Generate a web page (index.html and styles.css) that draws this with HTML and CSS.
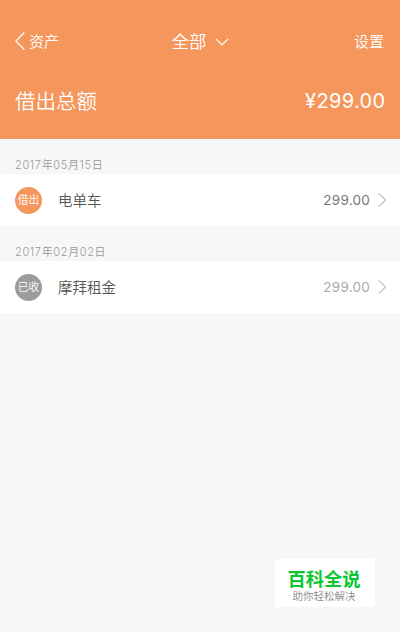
FILE: index.html
```html
<!DOCTYPE html>
<html lang="zh-CN">
<head>
  <meta charset="UTF-8">
  <title>借出总额</title>
  <link rel="stylesheet" href="styles.css">
</head>
<body>

<header class="header">
  <div class="nav">
    <a class="back">
      <svg width="10" height="18" viewBox="0 0 10 18"><path d="M9.3 0.5 L0.8 9 L9.3 17.5" /></svg>
      <span>资产</span>
    </a>
    <div class="title">
      <span>全部</span>
      <svg width="14" height="8" viewBox="0 0 14 8"><path d="M0.8 0.8 L7 7 L13.2 0.8" /></svg>
    </div>
    <a class="settings">设置</a>
  </div>
  <div class="total">
    <span class="total-label">借出总额</span>
    <span class="total-amount">¥299.00</span>
  </div>
</header>

<main>
  <h3 class="date">2017年05月15日</h3>
  <div class="row">
    <span class="tag">借出</span>
    <span class="name">电单车</span>
    <span class="amount">299.00</span>
    <svg class="arrow" width="9" height="14" viewBox="0 0 9 14"><path d="M0.8 0.5 L7.6 7 L0.8 13.5" /></svg>
  </div>
  <h3 class="date">2017年02月02日</h3>
  <div class="row done">
    <span class="tag">已收</span>
    <span class="name">摩拜租金</span>
    <span class="amount">299.00</span>
    <svg class="arrow" width="9" height="14" viewBox="0 0 9 14"><path d="M0.8 0.5 L7.6 7 L0.8 13.5" /></svg>
  </div>
</main>

<div class="watermark">
  <div class="brand">百科全说</div>
  <div class="slogan">助你轻松解决</div>
</div>

</body>
</html>
```
FILE: styles.css
```css
* { box-sizing: border-box; }
body { margin: 0; height: 632px; position: relative; overflow: hidden; background: #f7f7f7; font-family: Inter, "Noto Sans CJK SC", sans-serif; font-weight: 350; }
svg { fill: none; stroke: #fff; stroke-width: 1.2; display: block; flex: none; }

.header { height: 139px; padding: 26px 15px 0; background: #f5965d; color: #fff; }
.nav { height: 30px; display: grid; grid-template-columns: 1fr auto 1fr; align-items: center; font-size: 15px; line-height: 30px; }
.nav span, .settings { padding-top: 1px; }
.back { display: flex; align-items: center; gap: 4px; }
.back svg { margin-top: -1px; }
.title { display: flex; align-items: center; gap: 8px; font-size: 17.5px; }
.title svg { margin-top: 1px; }
.settings { text-align: right; padding-right: 1px; }
.total { height: 30px; margin-top: 31px; display: flex; justify-content: space-between; line-height: 30px; }
.total-label { font-size: 20.5px; }
.total-amount { margin-top: -1px; font-size: 20px; font-weight: 400; letter-spacing: 0.35px; margin-right: -0.5px; }

.date { height: 35px; margin: 0; padding: 16px 15px 0; font-size: 11px; line-height: 20px; font-weight: 350; color: #999; letter-spacing: 0.65px; }
.row { height: 52px; padding: 0 13px 0 15px; display: flex; align-items: center; background: #fff; color: #555; }
.tag { width: 27px; height: 27px; border-radius: 50%; background: #f5965d; color: #fff; font-size: 10.8px; line-height: 28px; text-align: center; }
.name { margin-left: 16px; margin-top: -2px; font-size: 14.5px; }
.amount { margin-left: auto; margin-top: -1px; font-size: 13.5px; font-weight: 400; letter-spacing: 0.25px; color: #777; }
.arrow { margin-left: 8px; margin-top: -1px; stroke: #999; stroke-width: 1; }
.done .tag { background: #9d9b9b; }
.done .amount { color: #aaa; }

.watermark { position: absolute; left: 275px; top: 559px; width: 100px; height: 48px; padding-top: 8px; background: #fff; text-align: center; }
.brand { font-size: 18.3px; line-height: 24px; font-weight: 700; color: #0ac72f; margin-right: 2px; }
.slogan { font-size: 10.5px; line-height: 12px; color: #888; margin-right: 2px; }
```
